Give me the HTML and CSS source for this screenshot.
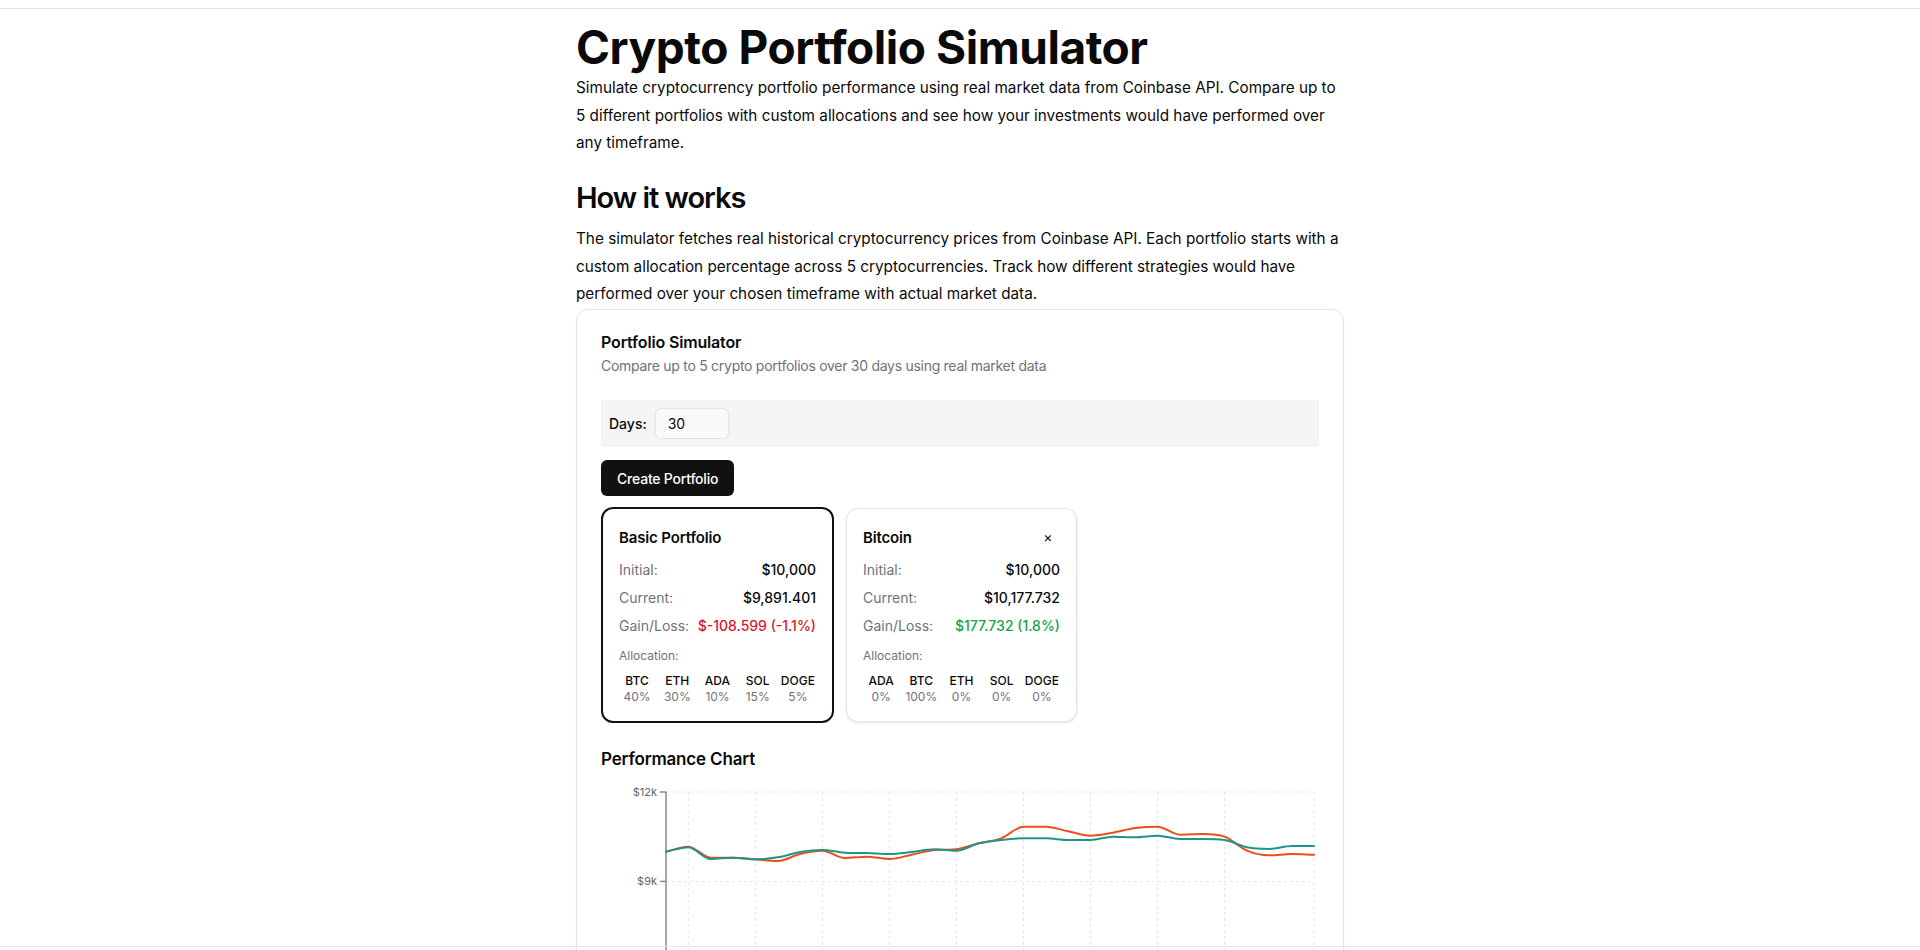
FILE: index.html
```html
<!DOCTYPE html>
<html lang="en">
<head>
<meta charset="utf-8">
<title>Crypto Portfolio Simulator</title>
<link rel="stylesheet" href="styles.css">
</head>
<body>
<div class="frame">
  <main class="container">
    <h1 class="title">Crypto Portfolio Simulator</h1>
    <p class="lead">Simulate cryptocurrency portfolio performance using real market data from Coinbase API. Compare up to 5 different portfolios with custom allocations and see how your investments would have performed over any timeframe.</p>
    <h2 class="subtitle">How it works</h2>
    <p class="lead lead-2">The simulator fetches real historical cryptocurrency prices from Coinbase API. Each portfolio starts with a custom allocation percentage across 5 cryptocurrencies. Track how different strategies would have performed over your chosen timeframe with actual market data.</p>

    <section class="card">
      <div class="card-header">
        <h3 class="card-title">Portfolio Simulator</h3>
        <p class="card-desc">Compare up to 5 crypto portfolios over 30 days using real market data</p>
      </div>
      <div class="card-content">
        <div class="controls">
          <label class="days-label" for="days">Days:</label>
          <input class="days-input" id="days" type="text" value="30">
        </div>
        <button class="btn" type="button">Create Portfolio</button>

        <div class="portfolios">
          <div class="pcard selected">
            <div class="pcard-head">
              <span class="pcard-title">Basic Portfolio</span>
            </div>
            <div class="rows">
              <div class="row"><span class="lbl">Initial:</span><span class="val">$10,000</span></div>
              <div class="row"><span class="lbl">Current:</span><span class="val">$9,891.401</span></div>
              <div class="row"><span class="lbl">Gain/Loss:</span><span class="val loss">$-108.599 (-1.1%)</span></div>
            </div>
            <div class="alloc-label">Allocation:</div>
            <div class="alloc">
              <div class="coin"><span class="tick">BTC</span><span class="pct">40%</span></div>
              <div class="coin"><span class="tick">ETH</span><span class="pct">30%</span></div>
              <div class="coin"><span class="tick">ADA</span><span class="pct">10%</span></div>
              <div class="coin"><span class="tick">SOL</span><span class="pct">15%</span></div>
              <div class="coin"><span class="tick">DOGE</span><span class="pct">5%</span></div>
            </div>
          </div>

          <div class="pcard">
            <div class="pcard-head">
              <span class="pcard-title">Bitcoin</span>
              <button class="close" type="button">×</button>
            </div>
            <div class="rows">
              <div class="row"><span class="lbl">Initial:</span><span class="val">$10,000</span></div>
              <div class="row"><span class="lbl">Current:</span><span class="val">$10,177.732</span></div>
              <div class="row"><span class="lbl">Gain/Loss:</span><span class="val gain">$177.732 (1.8%)</span></div>
            </div>
            <div class="alloc-label">Allocation:</div>
            <div class="alloc">
              <div class="coin"><span class="tick">ADA</span><span class="pct">0%</span></div>
              <div class="coin"><span class="tick">BTC</span><span class="pct">100%</span></div>
              <div class="coin"><span class="tick">ETH</span><span class="pct">0%</span></div>
              <div class="coin"><span class="tick">SOL</span><span class="pct">0%</span></div>
              <div class="coin"><span class="tick">DOGE</span><span class="pct">0%</span></div>
            </div>
          </div>
        </div>

        <h4 class="chart-title">Performance Chart</h4>
        <svg class="chart" width="717" height="400" viewBox="0 0 717 400">
          <g class="grid">
            <line x1="65" y1="10" x2="713" y2="10"/>
            <line x1="65" y1="99.4" x2="713" y2="99.4"/>
            <line x1="65" y1="188.8" x2="713" y2="188.8"/>
            <line x1="65" y1="278.2" x2="713" y2="278.2"/>
            <line x1="87.34" y1="10" x2="87.34" y2="367.6"/>
            <line x1="154.38" y1="10" x2="154.38" y2="367.6"/>
            <line x1="221.41" y1="10" x2="221.41" y2="367.6"/>
            <line x1="288.45" y1="10" x2="288.45" y2="367.6"/>
            <line x1="355.48" y1="10" x2="355.48" y2="367.6"/>
            <line x1="422.52" y1="10" x2="422.52" y2="367.6"/>
            <line x1="489.55" y1="10" x2="489.55" y2="367.6"/>
            <line x1="556.59" y1="10" x2="556.59" y2="367.6"/>
            <line x1="623.62" y1="10" x2="623.62" y2="367.6"/>
            <line x1="713" y1="10" x2="713" y2="367.6"/>
          </g>
          <g class="axis">
            <line x1="65" y1="10" x2="65" y2="367.6"/>
            <line x1="59" y1="10" x2="65" y2="10"/>
            <line x1="59" y1="99.4" x2="65" y2="99.4"/>
            <line x1="59" y1="188.8" x2="65" y2="188.8"/>
            <line x1="59" y1="278.2" x2="65" y2="278.2"/>
          </g>
          <g class="ylabels">
            <text x="56" y="14">$12k</text>
            <text x="56" y="103.4">$9k</text>
            <text x="56" y="192.8">$6k</text>
            <text x="56" y="282.2">$3k</text>
          </g>
          <path class="series s-basic" d="M65,69.67 C72.45,68 79.89,64.67 87.34,64.67 C94.79,64.67 102.24,75.67 109.69,75.67 C117.14,75.67 124.58,75.67 132.03,75.67 C139.48,75.67 146.93,76.78 154.38,77.33 C161.83,77.89 169.27,79 176.72,79 C184.17,79 191.62,73.72 199.07,72 C206.52,70.28 213.96,68.67 221.41,68.67 C228.86,68.67 236.31,76 243.76,76 C251.21,76 258.65,74.67 266.1,74.67 C273.55,74.67 281,77 288.45,77 C295.9,77 303.34,74.17 310.79,72.67 C318.24,71.17 325.69,68.89 333.14,68 C340.59,67.11 348.03,68.44 355.48,67.33 C362.93,66.22 370.38,63.16 377.83,61.33 C385.28,59.5 392.72,59.11 400.17,56.33 C407.62,53.55 415.07,44.67 422.52,44.67 C429.97,44.67 437.41,44.67 444.86,44.67 C452.31,44.67 459.76,47.83 467.21,49.33 C474.66,50.83 482.1,53.67 489.55,53.67 C497,53.67 504.45,51.95 511.9,50.67 C519.35,49.39 526.79,47 534.24,46 C541.69,45 549.14,44.67 556.59,44.67 C564.04,44.67 571.48,52.67 578.93,52.67 C586.38,52.67 593.83,52 601.28,52 C608.73,52 616.17,51.89 623.62,54.67 C631.07,57.45 638.52,65.56 645.97,68.67 C653.42,71.78 660.86,73.33 668.31,73.33 C675.76,73.33 683.21,72 690.66,72 C698.11,72 705.55,72.45 713,72.67"/>
          <path class="series s-btc" d="M65,69.67 C72.45,68.22 79.89,65.33 87.34,65.33 C94.79,65.33 102.24,77 109.69,77 C117.14,77 124.58,75.67 132.03,75.67 C139.48,75.67 146.93,77.33 154.38,77.33 C161.83,77.33 169.27,76.55 176.72,75.33 C184.17,74.11 191.62,71.22 199.07,70 C206.52,68.78 213.96,68 221.41,68 C228.86,68 236.31,70.34 243.76,70.67 C251.21,71 258.65,70.78 266.1,71 C273.55,71.22 281,72 288.45,72 C295.9,72 303.34,70.78 310.79,70 C318.24,69.22 325.69,67.33 333.14,67.33 C340.59,67.33 348.03,68.67 355.48,68.67 C362.93,68.67 370.38,63.11 377.83,61.33 C385.28,59.55 392.72,58.83 400.17,58 C407.62,57.17 415.07,56.33 422.52,56.33 C429.97,56.33 437.41,56.33 444.86,56.33 C452.31,56.33 459.76,58 467.21,58 C474.66,58 482.1,58 489.55,58 C497,58 504.45,54.67 511.9,54.67 C519.35,54.67 526.79,55.33 534.24,55.33 C541.69,55.33 549.14,53.67 556.59,53.67 C564.04,53.67 571.48,57 578.93,57 C586.38,57 593.83,57 601.28,57 C608.73,57 616.17,57 623.62,58 C631.07,59 638.52,63.83 645.97,65.33 C653.42,66.83 660.86,67 668.31,67 C675.76,67 683.21,64 690.66,64 C698.11,64 705.55,64 713,64"/>
        </svg>
      </div>
    </section>
  </main>
</div>
<div class="bottom-rule"></div>
</body>
</html>
```

FILE: styles.css
```css
* { box-sizing: border-box; }

html { scrollbar-width: none; }
html::-webkit-scrollbar { display: none; }

body {
  margin: 0;
  background: #ffffff;
  color: #0a0a0a;
  font-family: Inter, "Noto Sans", "Liberation Sans", sans-serif;
}

.frame {
  margin-top: 8px;
  border-top: 1px solid #e5e5e5;
}

.container {
  max-width: 768px;
  margin: 0 auto;
}

.title {
  margin: 0;
  padding-top: 14px;
  font-size: 46px;
  line-height: 48px;
  font-weight: 700;
  letter-spacing: -0.01em;
}

.lead {
  margin: 3px 0 0;
  font-size: 15.3px;
  line-height: 27.6px;
  letter-spacing: 0;
  color: #0a0a0a;
}

.subtitle {
  margin: 23px 0 0;
  font-size: 29px;
  line-height: 36px;
  font-weight: 600;
  letter-spacing: -0.035em;
}

.lead-2 { margin-top: 9.5px; }

.card {
  margin-top: 1px;
  border: 1px solid #e5e5e5;
  border-radius: 12px;
  background: #fff;
  box-shadow: 0 1px 2px rgba(0, 0, 0, 0.05);
}

.card-header {
  padding: 24px 24px 0;
}

.card-title {
  margin: 0;
  font-size: 16px;
  line-height: 16px;
  font-weight: 600;
  letter-spacing: -0.01em;
}

.card-desc {
  margin: 6px 0 0;
  font-size: 14px;
  line-height: 20px;
  letter-spacing: -0.02em;
  color: #71717a;
}

.card-content {
  padding: 24px;
}

.controls {
  display: flex;
  align-items: center;
  gap: 8px;
  padding: 8px;
  background: #f4f4f5;
}

.days-label {
  font-size: 14px;
  font-weight: 500;
}

.days-input {
  width: 74px;
  height: 31px;
  padding: 0 12px;
  border: 1px solid #e4e4e7;
  border-radius: 6px;
  background: #fafafa;
  font: inherit;
  font-size: 14px;
  color: #0a0a0a;
}

.btn {
  display: block;
  margin-top: 13px;
  height: 36px;
  padding: 0 16px;
  border: none;
  border-radius: 6px;
  background: #111111;
  color: #ffffff;
  font: inherit;
  font-size: 14px;
  font-weight: 500;
  letter-spacing: -0.015em;
}

.portfolios {
  display: flex;
  align-items: center;
  gap: 12px;
  margin-top: 11px;
}

.pcard {
  width: 231px;
  padding: 16px;
  border: 1px solid #e5e5e5;
  border-radius: 12px;
  background: #fff;
  box-shadow: 0 1px 3px rgba(0, 0, 0, 0.08), 0 1px 2px rgba(0, 0, 0, 0.04);
}

.pcard.selected {
  width: 233px;
  border: 2px solid #111111;
  box-shadow: none;
}

.pcard-head {
  display: flex;
  align-items: center;
  justify-content: space-between;
  height: 24px;
}

.pcard-title {
  font-size: 15px;
  font-weight: 600;
  letter-spacing: -0.01em;
}

.close {
  width: 24px;
  height: 24px;
  padding: 0;
  border: none;
  background: transparent;
  font: inherit;
  font-size: 14px;
  line-height: 24px;
  color: #0a0a0a;
}

.rows {
  display: flex;
  flex-direction: column;
  gap: 8px;
  margin-top: 11px;
}

.row {
  display: flex;
  justify-content: space-between;
  font-size: 14px;
  line-height: 20px;
}

.lbl { color: #71717a; }
.val { color: #0a0a0a; font-weight: 500; }
.val.loss { color: #d7192d; }
.val.gain { color: #16a34a; }

.alloc-label {
  margin-top: 12px;
  font-size: 12px;
  line-height: 16px;
  color: #71717a;
}

.alloc {
  display: grid;
  grid-template-columns: repeat(5, 1fr);
  gap: 4px;
  margin-top: 9px;
  text-align: center;
}

.coin {
  display: flex;
  flex-direction: column;
}

.tick {
  font-size: 12px;
  line-height: 16px;
  font-weight: 500;
}

.pct {
  font-size: 12px;
  line-height: 16px;
  color: #71717a;
}

.chart-title {
  margin: 22px 0 0;
  font-size: 17px;
  line-height: 28px;
  font-weight: 600;
  letter-spacing: -0.01em;
}

.chart {
  display: block;
  margin-top: 9px;
}

.grid line {
  stroke: #e5e5e5;
  stroke-width: 1;
  stroke-dasharray: 3 3;
}

.axis line {
  stroke: #8a8a8a;
  stroke-width: 1.5;
}

.ylabels text {
  font-family: Inter, "Noto Sans", sans-serif;
  font-size: 11px;
  fill: #666666;
  text-anchor: end;
}

.series {
  fill: none;
  stroke-width: 2;
  stroke-linejoin: round;
  stroke-linecap: round;
}

.s-basic { stroke: #ee4d1c; }
.s-btc { stroke: #1f9488; }

.bottom-rule {
  position: fixed;
  left: 0;
  right: 0;
  bottom: 3px;
  height: 1px;
  background: #e5e5e5;
}
```
